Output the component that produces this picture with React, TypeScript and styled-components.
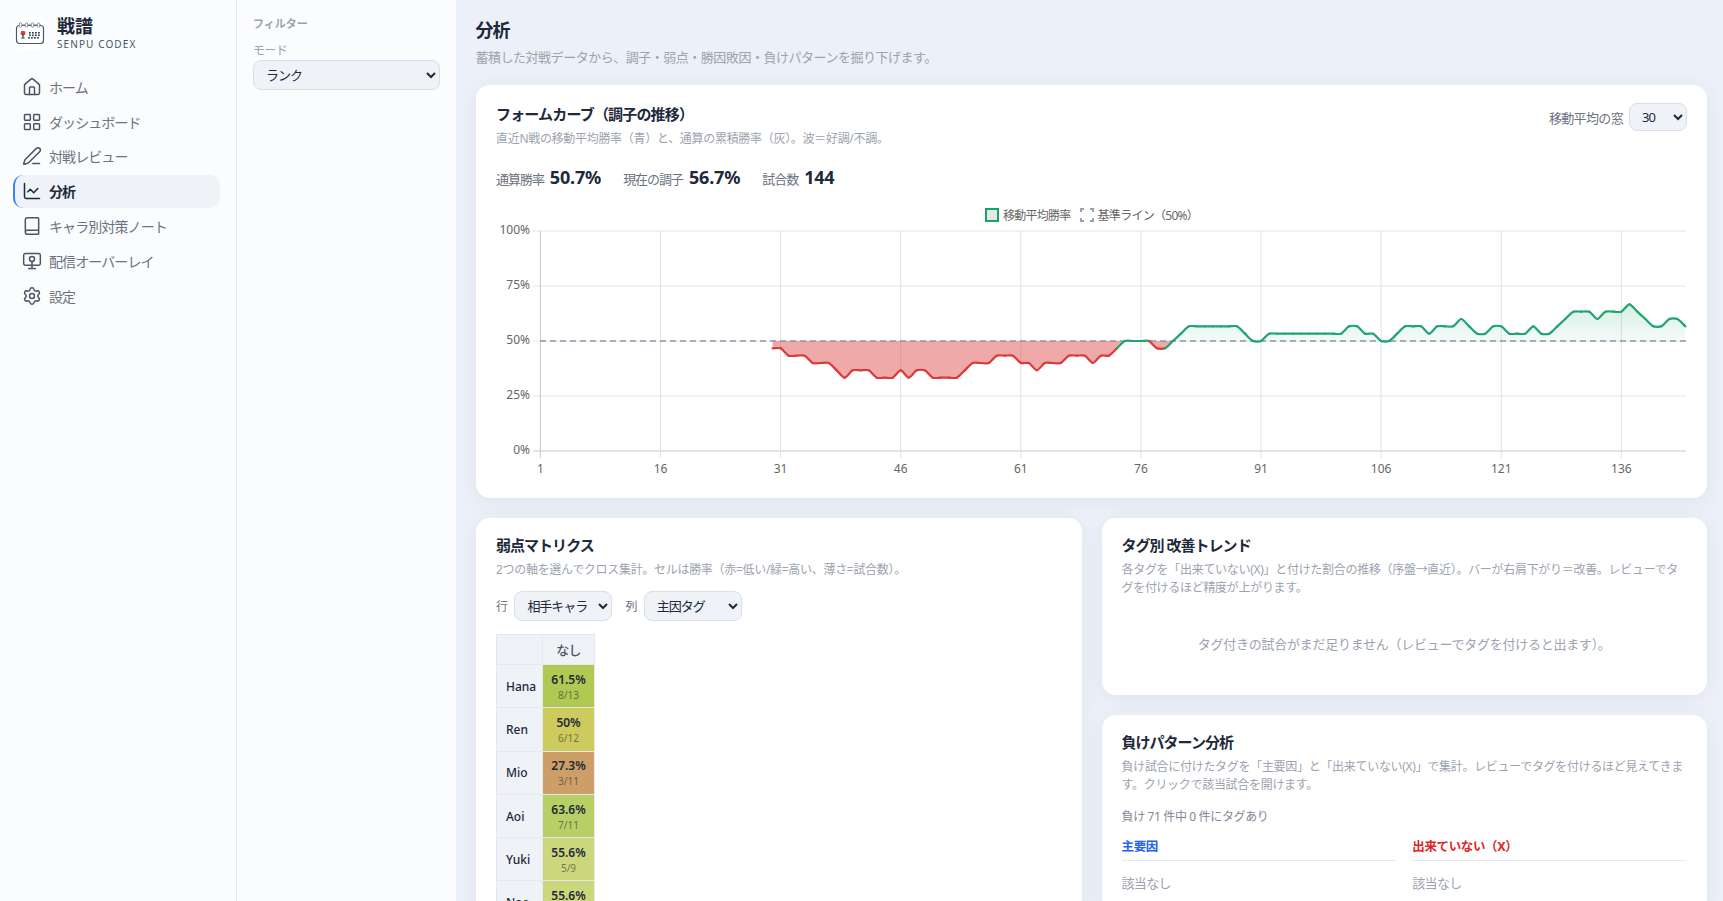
import React from "react";
import styled, { createGlobalStyle } from "styled-components";
import { House, LayoutGrid, PenLine, ChartLine, Book, Settings } from "lucide-react";

const Global = createGlobalStyle`
  html, body, #root { margin: 0; height: 100%; }
  body {
    overflow: hidden;
    font-family: "Noto Sans", "Noto Sans CJK JP", sans-serif;
    color: #1e293b;
  }
  * { box-sizing: border-box; letter-spacing: -0.05em; }
`;

const Shell = styled.div`
  display: flex;
  width: 100%;
  height: 100vh;
  overflow: hidden;
  background: #ecf0f8;
`;
const Sidebar = styled.aside`
  flex: 0 0 237px;
  background: #fbfcfe;
  border-right: 1px solid #e4e8f0;
  padding: 18px 16px 0 13px;
`;
const Brand = styled.div`
  display: flex;
  align-items: center;
  gap: 11px;
  margin: 0 0 20.3px 1px;
  height: 32px;
`;
const LogoBox = styled.div`
  width: 32px;
  height: 32px;
  background: #fff;
  border-radius: 8px;
  display: flex;
`;
const BrandText = styled.div`
  display: flex;
  flex-direction: column;
`;
const BrandName = styled.div`
  font-size: 18px;
  line-height: 20px;
  font-weight: 700;
  color: #1e293b;
  margin-top: -2px;
  letter-spacing: 0;
`;
const BrandSub = styled.div`
  font-size: 10px;
  line-height: 14px;
  letter-spacing: 1.1px;
  color: #475569;
  margin-top: 1px;
  white-space: nowrap;
`;
const Nav = styled.nav`
  display: flex;
  flex-direction: column;
  gap: 1.85px;
`;
const NavItem = styled.div<{ $active?: boolean }>`
  display: flex;
  align-items: center;
  gap: 7px;
  height: 33px;
  padding-left: 7px;
  border-radius: 10px;
  border-left: 2px solid ${(p) => (p.$active ? "#3b82f6" : "transparent")};
  background: ${(p) => (p.$active ? "#eff2f7" : "transparent")};
  font-size: 14px;
  letter-spacing: -0.065em;
  font-weight: ${(p) => (p.$active ? 700 : 400)};
  color: ${(p) => (p.$active ? "#1e293b" : "#6b7280")};
  svg { color: ${(p) => (p.$active ? "#1e293b" : "#4b5563")}; flex: none; }
`;
const FilterPane = styled.aside`
  flex: 0 0 219px;
  background: #fbfcfe;
  padding: 17px 16px 16px;
`;
const FilterHead = styled.div`
  font-size: 11px;
  line-height: 14px;
  font-weight: 700;
  color: #9ca3af;
  margin-bottom: 12px;
  letter-spacing: 0;
`;
const FilterLabel = styled.div`
  font-size: 12px;
  line-height: 16px;
  color: #9ca3af;
  margin-bottom: 1px;
`;
const Select = styled.select<{ $w: number; $h?: number }>`
  width: ${(p) => p.$w}px;
  height: ${(p) => p.$h ?? 30}px;
  background-color: #eff2f7;
  border: 1px solid #d8dfea;
  border-radius: 8px;
  padding: 0 0 0 8px;
  font: inherit;
  font-size: 13px;
  letter-spacing: -0.08em;
  color: #1e293b;
`;
const Main = styled.main`
  flex: 1;
  min-width: 0;
  padding: 18px 16px 0 19.5px;
`;
const PageTitle = styled.h1`
  margin: 0;
  font-size: 18px;
  line-height: 24px;
  font-weight: 700;
  color: #1e293b;
`;
const PageSub = styled.p`
  margin: 6px 0 19px;
  font-size: 13px;
  line-height: 18px;
  letter-spacing: -0.037em;
  color: #9ca3af;
`;
const Card = styled.section`
  background: #fff;
  border-radius: 14px;
  padding: 18px 20px 20px;
  box-shadow: 0 4px 18px rgba(90, 110, 160, 0.09);
`;
const FirstCard = styled(Card)`
  margin-left: 0.5px;
`;
const CardHead = styled.div`
  display: flex;
  justify-content: space-between;
  align-items: flex-start;
`;
const HeadText = styled.div`
  padding-top: 2px;
`;
const Title = styled.h2`
  margin: -1px 0 1px;
  font-size: 15px;
  line-height: 20px;
  font-weight: 700;
  color: #1e293b;
  letter-spacing: -0.065em;
`;
const FormTitle = styled(Title)`
  letter-spacing: -0.055em;
`;
const Sub = styled.p`
  margin: 6px 0 0;
  font-size: 12px;
  line-height: 18px;
  letter-spacing: -0.025em;
  color: #9ca3af;
`;
const WindowControl = styled.label`
  display: flex;
  align-items: center;
  gap: 6px;
  font-size: 13px;
  color: #6b7280;
`;
const Stats = styled.div`
  display: flex;
  gap: 22px;
  margin-top: 17px;
`;
const Stat = styled.div`
  display: flex;
  align-items: baseline;
  gap: 6px;
  font-size: 13px;
  line-height: 24px;
  letter-spacing: -0.08em;
  color: #6b7280;
`;
const StatValue = styled.strong`
  font-size: 18px;
  font-weight: 700;
  color: #1e293b;
  letter-spacing: -0.01em;
`;
const Legend = styled.div`
  display: flex;
  justify-content: center;
  align-items: center;
  gap: 4px;
  height: 16px;
  margin-top: 16px;
  padding-left: 5px;
  font-size: 12px;
  color: #666;
`;
const Swatch = styled.span`
  width: 14px;
  height: 14px;
  background: #e6e6e6;
  border: 2px solid #16a36a;
`;
const LegendText = styled.span`
  margin-right: 5px;
  letter-spacing: -0.06em;
`;
const ChartSvg = styled.svg`
  display: block;
  width: 100%;
  height: 254px;
  margin-top: 1px;
  text {
    letter-spacing: 0;
    font-family: "Noto Sans", sans-serif;
    font-size: 12px;
    fill: #666;
  }
`;
const Columns = styled.div`
  display: grid;
  grid-template-columns: 1fr 1fr;
  gap: 20px;
  margin: 20px 0 0 0.5px;
  align-items: start;
`;
const Stack = styled.div`
  display: flex;
  flex-direction: column;
  gap: 20px;
`;
const AxisRow = styled.div`
  display: flex;
  align-items: center;
  gap: 7px;
  margin-top: 12px;
  font-size: 12px;
  color: #6b7280;
`;
const AxisLabel = styled.span<{ $gap?: boolean }>`
  margin-left: ${(p) => (p.$gap ? 6 : 0)}px;
`;
const Matrix = styled.table`
  margin-top: 13px;
  border-collapse: collapse;
  table-layout: fixed;
  width: 98px;
`;
const HeadCell = styled.th<{ $w: number }>`
  width: ${(p) => p.$w}px;
  height: 30px;
  background: #eff2f7;
  border: 1px solid #e4e8f0;
  font-size: 13px;
  font-weight: 500;
  color: #4b5563;
`;
const RowHead = styled.th`
  height: 43.3px;
  background: #eff2f7;
  border: 1px solid #e4e8f0;
  padding-left: 9px;
  text-align: left;
  font-size: 12px;
  font-weight: 500;
  color: #1e293b;
  letter-spacing: 0;
`;
const DataCell = styled.td<{ $bg: string }>`
  background: ${(p) => p.$bg};
  border: 1px solid #e4e8f0;
  text-align: center;
  padding: 0;
`;
const Pct = styled.div`
  font-size: 12px;
  line-height: 17px;
  font-weight: 600;
  color: #1e293b;
  letter-spacing: 0;
`;
const Count = styled.div`
  font-size: 10px;
  line-height: 14px;
  color: #1e293b;
  opacity: 0.55;
  letter-spacing: 0;
`;
const Empty = styled.div`
  padding: 38px 0 21.5px;
  font-size: 13px;
  line-height: 18px;
  letter-spacing: -0.02em;
  text-align: center;
  color: #9ca3af;
`;
const CountLine = styled.div`
  margin-top: 14px;
  font-size: 12px;
  line-height: 18px;
  letter-spacing: -0.03em;
  color: #808896;
`;
const Split = styled.div`
  display: grid;
  grid-template-columns: 1fr 1fr;
  gap: 16px;
  margin-top: 12px;
`;
const SplitHead = styled.div<{ $color: string }>`
  font-size: 12.5px;
  line-height: 18px;
  font-weight: 700;
  letter-spacing: -0.03em;
  color: ${(p) => p.$color};
  padding-bottom: 4px;
  border-bottom: 1px solid #e4e8f0;
`;
const NoData = styled.div`
  margin-top: 13px;
  font-size: 13px;
  line-height: 18px;
  color: #9ca3af;
`;

const wins = [14,14,13,13,13,12,12,12,11,10,11,11,11,10,10,10,11,10,11,11,10,10,10,10,11,12,12,12,13,13,13,12,12,11,12,12,12,13,13,13,12,13,13,14,15,15,15,15,14,14,15,16,17,17,17,17,17,17,17,16,15,15,16,16,16,16,16,16,16,16,16,16,17,17,16,16,15,15,16,17,17,17,16,17,17,17,18,17,16,16,17,17,16,16,16,17,16,16,17,18,19,19,19,18,19,19,19,20,19,18,17,17,18,18,17];
const X = (i: number) => 540.4 + 8.007 * i;
const Y = (w: number) => 451 - (w / 30) * 220;
const pts = wins.map((w, k) => ({ x: X(k + 29), y: Y(w), w }));
const T = 0.25;
const ctrl = pts.map((p, i) => {
  const a = pts[Math.max(i - 1, 0)];
  const b = pts[Math.min(i + 1, pts.length - 1)];
  const d1 = Math.hypot(p.x - a.x, p.y - a.y);
  const d2 = Math.hypot(b.x - p.x, b.y - p.y);
  const s = d1 + d2 || 1;
  return {
    px: p.x - (T * d1 * (b.x - a.x)) / s,
    py: p.y - (T * d1 * (b.y - a.y)) / s,
    nx: p.x + (T * d2 * (b.x - a.x)) / s,
    ny: p.y + (T * d2 * (b.y - a.y)) / s,
  };
});
const seg = (i: number) =>
  `C${ctrl[i].nx.toFixed(2)} ${ctrl[i].ny.toFixed(2)} ${ctrl[i + 1].px.toFixed(2)} ${ctrl[i + 1].py.toFixed(2)} ${pts[i + 1].x.toFixed(2)} ${pts[i + 1].y.toFixed(2)}`;
const curve = pts.slice(1).map((_, i) => seg(i)).join(" ");
const area = `M${pts[0].x} 341 L${pts[0].x} ${pts[0].y} ${curve} L${pts[pts.length - 1].x} 341 Z`;
const segments = pts.slice(1).map((p, i) => ({
  d: `M${pts[i].x.toFixed(2)} ${pts[i].y.toFixed(2)} ${seg(i)}`,
  color: p.w >= 15 ? "#1fa56f" : "#dc3a3a",
}));

const yTicks = [
  { y: 231, t: "100%" },
  { y: 286, t: "75%" },
  { y: 341, t: "50%" },
  { y: 396, t: "25%" },
  { y: 451, t: "0%" },
];
const xTicks = [1, 16, 31, 46, 61, 76, 91, 106, 121, 136];

function FormChart() {
  return (
    <ChartSvg viewBox="496 224 1191 254" preserveAspectRatio="none">
      <defs>
        <clipPath id="above"><rect x="540" y="231" width="1146" height="110" /></clipPath>
        <clipPath id="below"><rect x="540" y="341" width="1146" height="110" /></clipPath>
        <linearGradient id="greenFill" gradientUnits="userSpaceOnUse" x1="0" y1="296" x2="0" y2="341">
          <stop offset="0" stopColor="#1fa56f" stopOpacity="0.2" />
          <stop offset="1" stopColor="#1fa56f" stopOpacity="0.05" />
        </linearGradient>
      </defs>
      {yTicks.map((t) => (
        <line key={t.y} x1="533" x2="1686" y1={t.y} y2={t.y} stroke={t.y === 451 ? "#c8c8c8" : "#e4e4e4"} />
      ))}
      {xTicks.map((n) => {
        const x = X(n - 1);
        return <line key={n} x1={x} x2={x} y1="231" y2="458" stroke={n === 1 ? "#c8c8c8" : "#e2e2e2"} />;
      })}
      <path d={area} fill="url(#greenFill)" clipPath="url(#above)" />
      <path d={area} fill="rgba(220,50,50,0.42)" clipPath="url(#below)" />
      <line x1="540" x2="1686" y1="341" y2="341" stroke="#8f97ad" strokeWidth="1.5" strokeDasharray="6 4" />
      {segments.map((s, i) => (
        <path key={i} d={s.d} fill="none" stroke={s.color} strokeWidth="2.2" strokeLinecap="round" />
      ))}
      {yTicks.map((t) => (
        <text key={t.y} x="530" y={t.y + 3} textAnchor="end">{t.t}</text>
      ))}
      {xTicks.map((n) => (
        <text key={n} x={X(n - 1)} y="473" textAnchor="middle">{n}</text>
      ))}
    </ChartSvg>
  );
}

function Logo() {
  return (
    <LogoBox>
      <svg width="32" height="32" viewBox="0 0 32 32" fill="none">
        <rect x="2.5" y="7.5" width="27" height="18" rx="3" stroke="#4b5563" strokeWidth="1.2" fill="#fff" />
        <path d="M5 7h22" stroke="#6b7280" strokeWidth="0.9" />
        {[6.5, 12.5, 18.5, 24.5].map((x) => (
          <ellipse key={x} cx={x} cy="7" rx="1.4" ry="2.2" fill="#fff" stroke="#6b7280" strokeWidth="0.8" />
        ))}
        <circle cx="9" cy="15.2" r="2.4" fill="#d9432b" />
        <path d="M9 16v3.4M7.3 20h3.4" stroke="#374151" strokeWidth="1.2" />
        {[14, 17, 20, 23].map((x) =>
          [14, 16.5, 19].map((y) => (
            <rect key={`${x}-${y}`} x={x + (y === 19 ? 0 : 1)} y={y} width="1.8" height="1.6" fill="#374151" />
          ))
        )}
      </svg>
    </LogoBox>
  );
}

function StreamIcon() {
  return (
    <svg width="20" height="20" viewBox="0 0 24 24" fill="none" stroke="currentColor" strokeWidth="1.8" strokeLinecap="round" strokeLinejoin="round">
      <rect x="2" y="3" width="20" height="14" rx="2" />
      <circle cx="12" cy="9.5" r="3" />
      <path d="M12 12.5V21M8 21h8" />
    </svg>
  );
}

const navItems = [
  { label: "ホーム", icon: <House size={20} strokeWidth={1.8} /> },
  { label: "ダッシュボード", icon: <LayoutGrid size={20} strokeWidth={1.8} /> },
  { label: "対戦レビュー", icon: <PenLine size={20} strokeWidth={1.8} /> },
  { label: "分析", icon: <ChartLine size={20} strokeWidth={1.8} />, active: true },
  { label: "キャラ別対策ノート", icon: <Book size={20} strokeWidth={1.8} /> },
  { label: "配信オーバーレイ", icon: <StreamIcon /> },
  { label: "設定", icon: <Settings size={20} strokeWidth={1.8} /> },
];

const rows = [
  { name: "Hana", pct: "61.5%", count: "8/13", bg: "#afc952" },
  { name: "Ren", pct: "50%", count: "6/12", bg: "#cccb5c" },
  { name: "Mio", pct: "27.3%", count: "3/11", bg: "#cd9f66" },
  { name: "Aoi", pct: "63.6%", count: "7/11", bg: "#b6d066" },
  { name: "Yuki", pct: "55.6%", count: "5/9", bg: "#ccd77c" },
  { name: "Nao", pct: "55.6%", count: "5/9", bg: "#ccd77c" },
];

export default function App() {
  return (
    <Shell>
      <Global />
      <Sidebar>
        <Brand>
          <Logo />
          <BrandText>
            <BrandName>戦譜</BrandName>
            <BrandSub>SENPU CODEX</BrandSub>
          </BrandText>
        </Brand>
        <Nav>
          {navItems.map((n) => (
            <NavItem key={n.label} $active={n.active}>
              {n.icon}
              {n.label}
            </NavItem>
          ))}
        </Nav>
      </Sidebar>
      <FilterPane>
        <FilterHead>フィルター</FilterHead>
        <FilterLabel>モード</FilterLabel>
        <Select $w={187} defaultValue="ランク">
          <option>ランク</option>
        </Select>
      </FilterPane>
      <Main>
        <PageTitle>分析</PageTitle>
        <PageSub>蓄積した対戦データから、調子・弱点・勝因敗因・負けパターンを掘り下げます。</PageSub>
        <FirstCard>
          <CardHead>
            <HeadText>
              <FormTitle>フォームカーブ（調子の推移）</FormTitle>
              <Sub>直近N戦の移動平均勝率（青）と、通算の累積勝率（灰）。波＝好調/不調。</Sub>
            </HeadText>
            <WindowControl>
              移動平均の窓
              <Select $w={58} $h={28} defaultValue="30">
                <option>30</option>
              </Select>
            </WindowControl>
          </CardHead>
          <Stats>
            <Stat>通算勝率<StatValue>50.7%</StatValue></Stat>
            <Stat>現在の調子<StatValue>56.7%</StatValue></Stat>
            <Stat>試合数<StatValue>144</StatValue></Stat>
          </Stats>
          <Legend>
            <Swatch />
            <LegendText>移動平均勝率</LegendText>
            <svg width="14" height="14" viewBox="0 0 14 14" fill="none">
              <rect x="1" y="1" width="12" height="12" stroke="#94a3b8" strokeWidth="2" strokeDasharray="6 6" strokeDashoffset="3" />
            </svg>
            <LegendText>基準ライン（50%）</LegendText>
          </Legend>
          <FormChart />
        </FirstCard>
        <Columns>
          <Card>
            <Title>弱点マトリクス</Title>
            <Sub>2つの軸を選んでクロス集計。セルは勝率（赤=低い/緑=高い、薄さ=試合数）。</Sub>
            <AxisRow>
              <AxisLabel>行</AxisLabel>
              <Select $w={98} defaultValue="相手キャラ"><option>相手キャラ</option></Select>
              <AxisLabel $gap>列</AxisLabel>
              <Select $w={98} defaultValue="主因タグ"><option>主因タグ</option></Select>
            </AxisRow>
            <Matrix>
              <thead>
                <tr>
                  <HeadCell $w={46} />
                  <HeadCell $w={52}>なし</HeadCell>
                </tr>
              </thead>
              <tbody>
                {rows.map((r) => (
                  <tr key={r.name}>
                    <RowHead>{r.name}</RowHead>
                    <DataCell $bg={r.bg}>
                      <Pct>{r.pct}</Pct>
                      <Count>{r.count}</Count>
                    </DataCell>
                  </tr>
                ))}
              </tbody>
            </Matrix>
          </Card>
          <Stack>
            <Card>
              <Title>タグ別 改善トレンド</Title>
              <Sub>各タグを「出来ていない(X)」と付けた割合の推移（序盤→直近）。バーが右肩下がり＝改善。レビューでタグを付けるほど精度が上がります。</Sub>
              <Empty>タグ付きの試合がまだ足りません（レビューでタグを付けると出ます）。</Empty>
            </Card>
            <Card>
              <Title>負けパターン分析</Title>
              <Sub>負け試合に付けたタグを「主要因」と「出来ていない(X)」で集計。レビューでタグを付けるほど見えてきます。クリックで該当試合を開けます。</Sub>
              <CountLine>負け 71 件中 0 件にタグあり</CountLine>
              <Split>
                <div>
                  <SplitHead $color="#2563eb">主要因</SplitHead>
                  <NoData>該当なし</NoData>
                </div>
                <div>
                  <SplitHead $color="#dc2626">出来ていない（X）</SplitHead>
                  <NoData>該当なし</NoData>
                </div>
              </Split>
            </Card>
          </Stack>
        </Columns>
      </Main>
    </Shell>
  );
}
